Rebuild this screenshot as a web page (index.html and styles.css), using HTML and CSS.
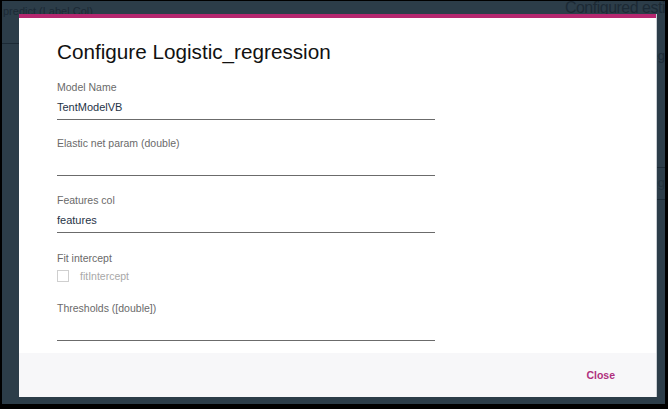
FILE: index.html
```html
<!DOCTYPE html>
<html>
<head>
<meta charset="utf-8">
<link rel="stylesheet" href="styles.css">
</head>
<body>
<div class="screen">
  <div class="backdrop">
    <div class="bg-row">
      <span class="bg-small">predict (Label Col)</span>
      <span class="bg-big">Configured esti</span>
    </div>
    <div class="bg-line left"></div>
    <div class="bg-eg">eg</div>
    <div class="bg-line right first"></div>
    <div class="bg-eg second">eg</div>
    <div class="bg-line right second"></div>
  </div>
  <div class="modal">
    <div class="modal-body">
      <h1 class="title">Configure Logistic_regression</h1>
      <div class="field">
        <div class="label">Model Name</div>
        <div class="input">TentModelVB</div>
      </div>
      <div class="field wide">
        <div class="label">Elastic net param (double)</div>
        <div class="input"></div>
      </div>
      <div class="field wider">
        <div class="label">Features col</div>
        <div class="input">features</div>
      </div>
      <div class="field check-field">
        <div class="label">Fit intercept</div>
        <div class="check"><span class="box"></span><span class="check-label">fitIntercept</span></div>
      </div>
      <div class="field">
        <div class="label">Thresholds ([double])</div>
        <div class="input"></div>
      </div>
    </div>
    <div class="modal-footer">
      <span class="close">Close</span>
    </div>
  </div>
</div>
</body>
</html>
```
FILE: styles.css
```css
html, body {
  margin: 0;
  padding: 0;
  background: #000;
  width: 668px;
  height: 409px;
  overflow: hidden;
}
.screen {
  position: relative;
  margin: 1px 3px 0 2px;
  height: 403px;
  background: #2c3d49;
  font-family: "Liberation Sans", Arial, sans-serif;
  overflow: hidden;
}
.backdrop {
  color: #1c2a35;
}
.bg-row {
  display: flex;
  justify-content: space-between;
  align-items: flex-start;
  height: 30px;
}
.bg-small {
  font-size: 11px;
  margin-top: 4px;
  margin-left: 1px;
}
.bg-big {
  font-size: 16px;
  letter-spacing: -0.5px;
  margin-top: -2px;
  margin-right: 0;
  white-space: nowrap;
}
.bg-line {
  height: 1px;
  background: #1c2a35;
}
.bg-line.left {
  width: 20px;
  margin-top: 12px;
}
.bg-eg {
  text-align: right;
  font-size: 13px;
  margin-top: 4px;
  margin-right: 0;
  height: 16px;
}
.bg-line.right {
  margin-left: auto;
  width: 10px;
}
.bg-line.right.first {
  margin-top: 103px;
}
.bg-eg.second {
  margin-top: 7px;
  opacity: 0.6;
}
.bg-line.right.second {
  margin-top: 8px;
}
.modal {
  position: absolute;
  left: 17px;
  top: 13px;
  width: 637px;
  height: 383px;
  background: #fff;
  border-top: 4px solid #b5276f;
  box-sizing: border-box;
  display: flex;
  flex-direction: column;
  box-shadow: 1px 0 0 #c9ced3;
}
.modal-body {
  flex: 1;
  min-height: 0;
  padding: 20px 0 0 38px;
}
.title {
  margin: 0 0 15px 0;
  font-weight: normal;
  font-size: 20.7px;
  line-height: 28px;
  color: #111;
}
.field {
  width: 378px;
  margin-bottom: 17px;
}
.field.wide {
  margin-bottom: 18px;
}
.field.wider {
  margin-bottom: 19px;
}
.label {
  font-size: 10.5px;
  color: #6a6a6a;
  line-height: 13px;
}
.input {
  height: 15px;
  margin-top: 6px;
  font-size: 11px;
  color: #1f3447;
  line-height: 14px;
  border-bottom: 1px solid #6b6b6b;
  padding: 0 0 4px 0;
}
.check-field {
  margin-bottom: 19px;
}
.check {
  display: flex;
  align-items: center;
  margin-top: 4px;
  height: 14px;
}
.box {
  width: 12px;
  height: 12px;
  border: 1px solid #cfcfcf;
  box-sizing: border-box;
  margin-right: 11px;
}
.check-label {
  font-size: 10.5px;
  color: #a8a8a8;
}
.modal-footer {
  flex-shrink: 0;
  height: 44px;
  background: #f7f7f9;
  display: flex;
  align-items: center;
  justify-content: flex-end;
  padding-right: 41px;
}
.close {
  font-size: 10.5px;
  font-weight: bold;
  color: #b0307e;
}
```
